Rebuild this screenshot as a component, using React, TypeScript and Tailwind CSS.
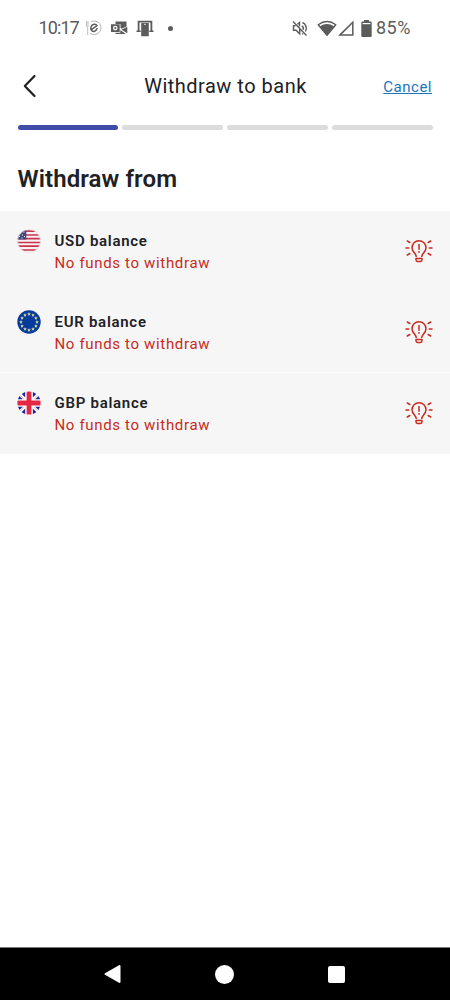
import React from "react";

function StatusBar() {
  return (
    <header className="flex h-14 items-center pl-[38px] text-[#5b5b5b]">
      <span className="w-[47px] pl-[0.5px] text-[18px] leading-6 tracking-[-0.9px]">10:17</span>
      <svg className="h-[18px] w-[18px]" viewBox="0 0 18 18" fill="none" stroke="currentColor">
        <path d="M1.500 2v4.500q0 2 1.200 2.500V16M3 2v6" strokeWidth="0.8" opacity="0.5" />
        <path d="M6 2.800a6.800 6.800 0 1 1-.8 11.500" strokeWidth="0.9" opacity="0.5" />
        <path d="M6.800 10.300 12 6.600C10.800 4.400 7.400 4.700 6.200 7.500c-1.200 3 .5 5.200 2.900 4.900 1.200-.2 2.500-1.400 3-2.800" strokeWidth="1.500" strokeLinecap="round" />
      </svg>
      <svg className="ml-[8px] h-[16px] w-[17px]" viewBox="0 0 17 16" fill="currentColor">
        <path d="M4.500 1.500H15.500v5L10.500 8.800 9.500 8V4H4.500z" />
        <path fillRule="evenodd" d="M0 4.300h8.700V12H0zM4.300 5.800a2.300 2.300 0 1 0 0 4.600A2.300 2.300 0 0 0 4.300 5.800zm0 1.200a1.100 1.100 0 1 1 0 2.200 1.100 1.100 0 0 1 0-2.200z" />
        <path d="M16.300 6.800v6.500L10.500 9.700zM9.300 10l5.500 4H4.500v-1.300h4.800z" />
      </svg>
      <svg className="ml-[8px] h-[18px] w-[18px]" viewBox="0 0 18 18" fill="currentColor">
        <path d="M1.700 1.800h14.600v9.700h1.200V13h-4.200v-1.500h1.200V3.500h-11v8h1.200V13H.5v-1.500h1.200z" />
        <rect x="5.200" y="4" width="7.600" height="13.300" rx="0.6" />
        <path d="M8 5.300h2" stroke="white" strokeWidth="0.800" />
      </svg>
      <span className="ml-[14px] h-[5px] w-[5px] rounded-full bg-[#5b5b5b]" />
      <svg className="ml-[119px] h-[17px] w-[16px]" viewBox="0 0 16 17" fill="none" stroke="currentColor" strokeWidth="1.400">
        <path d="M1 1.500 14.500 15.500M3.500 5.800H1.500v4.500h2.500l3.700 3.500V8M5.500 4.300l2-1.800v4M9.800 5.800c1.400.8 1.800 2.600 1.200 4M10.500 2.500c3.500 1.500 4.800 5.700 2.900 9M10 14.200l1-.5" />
      </svg>
      <svg className="ml-[9px] h-[17px] w-[20px]" viewBox="0 0 20 17">
        <path d="M1.200 4.700Q10-1.800 18.800 4.700L10 15.300z" fill="none" stroke="currentColor" strokeWidth="1.400" strokeLinejoin="round" />
        <path d="M3 6.300Q10 1.800 17 6.300L10 15.500z" fill="currentColor" />
      </svg>
      <svg className="ml-[1px] h-[17px] w-[16px]" viewBox="0 0 16 17" fill="none" stroke="currentColor" strokeWidth="1.500">
        <path d="M14.800 2.300v12.800H1.800z" />
      </svg>
      <svg className="ml-[7px] h-[17px] w-[11px]" viewBox="0 0 11 17" fill="currentColor">
        <path d="M3 0h5v1.500h1.700q1 0 1 1v13.500q0 1-1 1H1.300q-1 0-1-1V2.500q0-1 1-1H3z" />
        <path d="M1.600 3h7.800v1.200H1.600z" fill="white" />
      </svg>
      <span className="ml-[4px] text-[18px] leading-6 tracking-[0.5px]">85%</span>
    </header>
  );
}

function UsFlag() {
  return (
    <svg className="h-6 w-6" viewBox="0 0 24 24">
      <clipPath id="us"><circle cx="12" cy="12" r="11.500" /></clipPath>
      <g clipPath="url(#us)">
        <path fill="#f4f2f2" d="M0 0h24v24H0z" />
        <path d="M0 2.200h24M0 6h24M0 9.700h24M0 13.500h24M0 17.200h24M0 21h24" stroke="#ce314c" strokeWidth="1.700" />
        <path fill="#40477d" d="M0 0h9.300v10.500H0z" />
        <path d="M3 4.500h1M6.500 3h1M5 6h1M2 7.500h1M7 7.500h1M4.500 9h1" stroke="#fff" strokeWidth="1.200" />
      </g>
      <circle cx="12" cy="12" r="11.500" fill="none" stroke="#e4e1e2" strokeWidth="0.800" />
    </svg>
  );
}

function EuFlag() {
  return (
    <svg className="h-6 w-6" viewBox="0 0 24 24">
      <circle cx="12" cy="12" r="11.700" fill="#073b9b" />
      {Array.from({ length: 12 }, (_, i) => (
        <path
          key={i}
          transform={`translate(${12 + 8 * Math.sin((i * Math.PI) / 6)} ${12 - 8 * Math.cos((i * Math.PI) / 6)})`}
          d="M0-1.500.4-.5 1.500-.4.7.3.9 1.400 0 .8-.9 1.400-.7.3-1.500-.4-.4-.5z"
          fill="#f1ee9c"
          stroke="#f1ee9c"
          strokeWidth="0.200"
        />
      ))}
    </svg>
  );
}

function UkFlag() {
  return (
    <svg className="h-6 w-6" viewBox="0 0 24 24">
      <clipPath id="uk"><circle cx="12" cy="12" r="11.600" /></clipPath>
      <g clipPath="url(#uk)">
        <path fill="#fafafa" d="M0 0h24v24H0z" />
        <path fill="#17239a" d="M8.300 0v6.500L4.300 2.500V0zM15.700 0v6.500l4-4V0zM8.300 24v-6.500l-4 4V24zM15.700 24v-6.500l4 4V24zM0 8.500h6L2.300 5H0zM24 8.500h-6L21.700 5H24zM0 15.500h6L2.300 19H0zM24 15.500h-6l3.700 3.500H24z" />
        <path d="m2 3.300 5.300 5.200M22 3.300l-5.300 5.200M2 20.700l5.300-5.200M22 20.700l-5.300-5.200" stroke="#e89aa8" strokeWidth="0.800" />
        <path d="M12 0v24M0 12h24" stroke="#fff" strokeWidth="7" />
        <path d="M12 0v24M0 12h24" stroke="#e52743" strokeWidth="4.800" />
      </g>
    </svg>
  );
}

function AlertBulb() {
  return (
    <svg className="h-[26px] w-7" viewBox="0 0 28 26" fill="none" stroke="#c72b20" strokeWidth="1.500" strokeLinecap="round" strokeLinejoin="round">
      <path d="M11.200 18.500c0-2.800-4.200-4.500-4.200-8.800a7 7 0 0 1 14 0c0 4.300-4.200 6-4.200 8.800M11 20.500h6v1.300q0 1.700-1.500 1.700h-3Q11 23.500 11 21.800zM14 6.500v4.700" />
      <path d="M14 13.800v.2" strokeWidth="1.700" />
      <path d="M1 10h2.700M24.300 10H27M2.300 3l2.500 1.500M25.700 3l-2.500 1.500M2.300 17l2.500-1.500M25.700 17l-2.500-1.500" />
    </svg>
  );
}

const balances = [
  { currency: "USD", flag: <UsFlag /> },
  { currency: "EUR", flag: <EuFlag /> },
  { currency: "GBP", flag: <UkFlag /> },
];

export default function App() {
  return (
    <div className="flex h-[1000px] w-[450px] flex-col overflow-hidden bg-white font-['Roboto',sans-serif] text-[#202124]">
      <StatusBar />
      <div className="grid h-[60px] grid-cols-[80px_1fr_80px] items-center px-[18px]">
        <button aria-label="Back" className="flex pl-[5px]">
          <svg className="h-6 w-4" viewBox="0 0 16 24" fill="none" stroke="#202020" strokeWidth="2.200" strokeLinecap="round" strokeLinejoin="round">
            <path d="M11.500 2 1.800 12l9.700 10" />
          </svg>
        </button>
        <h1 className="pl-[1px] text-center text-[20px] leading-6 tracking-[0.5px] whitespace-nowrap">Withdraw to bank</h1>
        <a className="pt-px text-right text-[15px] leading-5 tracking-[0.5px] text-[#1976bd] underline">Cancel</a>
      </div>
      <div className="mt-[9px] grid h-[4px] grid-cols-4 gap-[4.5px] px-[17.5px]">
        <i className="h-[4.5px] rounded-full bg-[#3f4da9]" />
        <i className="h-[4.5px] rounded-full bg-[#dcdcdc]" />
        <i className="h-[4.5px] rounded-full bg-[#dcdcdc]" />
        <i className="h-[4.5px] rounded-full bg-[#dcdcdc]" />
      </div>
      <h2 className="mt-[34px] px-[17.5px] text-[24px] leading-8 font-semibold tracking-[0.1px]">Withdraw from</h2>
      <main className="mt-[16px] flex flex-col bg-[#f6f6f6]">
        {balances.map(({ currency, flag }) => (
          <section key={currency} className="flex h-[81px] items-start border-b border-[#f6f6f6] pr-[17px] pl-[17px] nth-2:border-[#fafafa]">
            <div className="pt-[18px]">{flag}</div>
            <div className="flex-1 pt-[19px] pl-[13.5px] text-[15px] leading-[22px]">
              <h3 className="font-semibold tracking-[0.72px]">{currency} balance</h3>
              <p className="tracking-[0.66px] text-[#c72b20]">No funds to withdraw</p>
            </div>
            <div className="pt-[27px]"><AlertBulb /></div>
          </section>
        ))}
      </main>
      <nav className="mt-auto flex h-[53px] items-center border-t border-[#777] bg-black pl-[104px]">
        <svg className="h-5 w-[19px]" viewBox="0 0 19 20"><path d="M1.500 10 15.500 2v16z" fill="white" stroke="white" strokeWidth="2" strokeLinejoin="round" /></svg>
        <span className="ml-[92px] h-[19px] w-[19px] rounded-full bg-white" />
        <span className="ml-[94px] h-[17px] w-[17px] rounded-[2px] bg-white" />
      </nav>
    </div>
  );
}
